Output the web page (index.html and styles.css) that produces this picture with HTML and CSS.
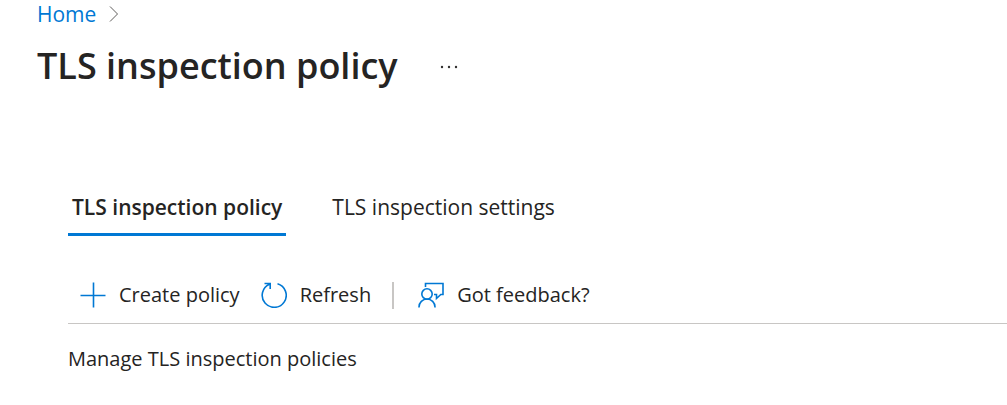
FILE: index.html
```html
<!DOCTYPE html>
<html lang="en">
<head>
<meta charset="utf-8">
<title>TLS inspection policy</title>
<link rel="stylesheet" href="styles.css">
</head>
<body>
<header class="page-header">
  <nav class="breadcrumb" aria-label="Breadcrumb">
    <a class="breadcrumb-link" href="#">Home</a>
    <svg class="chevron" viewBox="0 0 10 18" aria-hidden="true"><path d="M1 1.500l7.500 7.500L1 16.500"/></svg>
  </nav>
  <div class="title-row">
    <h1 class="title">TLS inspection policy</h1>
    <button class="more" type="button" aria-label="More actions">
      <svg class="dots" viewBox="0 0 18 4" aria-hidden="true"><circle cx="2" cy="2" r="1.200"/><circle cx="9" cy="2" r="1.200"/><circle cx="16" cy="2" r="1.200"/></svg>
    </button>
  </div>
</header>
<main class="content">
  <div class="tabs" role="tablist">
    <button class="tab tab-active" type="button" role="tab" aria-selected="true">TLS inspection policy</button>
    <button class="tab" type="button" role="tab" aria-selected="false">TLS inspection settings</button>
  </div>
  <div class="toolbar" role="toolbar" aria-label="Policy actions">
    <button class="command" type="button">
      <svg class="icon" viewBox="0 0 26 26" aria-hidden="true"><path d="M13.500 .5v25M.5 13.500h25"/></svg>
      <span>Create policy</span>
    </button>
    <button class="command" type="button">
      <svg class="icon" viewBox="0 0 26 26" aria-hidden="true"><path d="M16.500 1.800A12 12 0 1 1 8.500 2.300M3.500 1.500H9.200V7"/></svg>
      <span>Refresh</span>
    </button>
    <span class="divider"></span>
    <button class="command" type="button">
      <svg class="icon" viewBox="0 0 26 26" aria-hidden="true"><circle cx="9" cy="12" r="5.200"/><path d="M1 25.500v-.500a8 8 0 0 1 16 0v.500M7.500 5V1.500H25V12.500H22.800L18.500 16.500V12.500H16"/></svg>
      <span>Got feedback?</span>
    </button>
  </div>
  <p class="description">Manage TLS inspection policies</p>
</main>
</body>
</html>
```
FILE: styles.css
```css
body {
  margin: 0;
  background: #fff;
  color: #252423;
  font-family: "Segoe UI", "Open Sans", "Noto Sans", sans-serif;
  font-size: 20px;
  line-height: 28px;
}

button {
  padding: 0;
  border: 0;
  background: none;
  color: inherit;
  font: inherit;
  cursor: pointer;
}

svg {
  flex: none;
  fill: none;
  stroke: #0078d4;
}

.page-header {
  padding-left: 37px;
}

.breadcrumb,
.title-row {
  display: flex;
  align-items: center;
}

.breadcrumb {
  gap: 13px;
  font-size: 21px;
}

.breadcrumb-link {
  color: #0078d4;
  text-decoration: none;
}

.chevron {
  width: 10px;
  height: 18px;
  stroke: #605e5c;
}

.title-row {
  gap: 42px;
  padding-top: 14px;
}

.title {
  margin: 0;
  font-size: 36px;
  font-weight: 600;
  line-height: 48px;
}

.more {
  display: flex;
  padding-top: 2px;
}

.dots {
  width: 18px;
  height: 4px;
  fill: #323130;
  stroke: none;
}

.content {
  padding: 96px 0 24px 68px;
}

.tabs {
  display: flex;
  gap: 42px;
  font-size: 21px;
}

.tab {
  padding: 7px 4px 12px;
  border-bottom: 3px solid transparent;
}

.tab-active {
  border-bottom-color: #0078d4;
  font-weight: 600;
}

.toolbar {
  display: flex;
  align-items: center;
  gap: 21px;
  padding: 45px 12px 14px;
  border-bottom: 1px solid #c8c6c4;
}

.command {
  display: flex;
  align-items: center;
  gap: 13px;
}

.icon {
  width: 26px;
  height: 26px;
  stroke-width: 1.600;
}

.divider {
  width: 2px;
  height: 27px;
  margin-right: 3px;
  background: #c8c6c4;
}

.description {
  margin: 21px 0 0;
}
```
